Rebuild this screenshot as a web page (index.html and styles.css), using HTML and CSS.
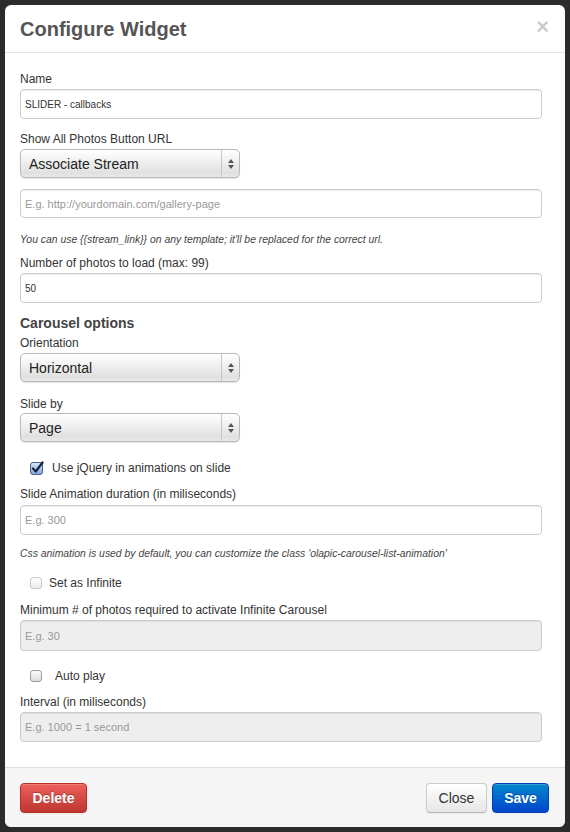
FILE: index.html
```html
<!DOCTYPE html>
<html>
<head>
<meta charset="utf-8">
<link rel="stylesheet" href="styles.css">
</head>
<body>
<div class="modal">
  <div class="modal-header">
    <h3 class="title">Configure Widget</h3>
    <span class="close-x">×</span>
  </div>
  <div class="modal-body">
    <div class="label">Name</div>
    <div class="input mt2 val">SLIDER - callbacks</div>

    <div class="label mt10">Show All Photos Button URL</div>
    <div class="select mt2"><span class="select-text">Associate Stream</span><span class="select-arrows"><svg width="8" height="12" viewBox="0 0 8 12"><path d="M4 1 L7 5 L1 5 Z M4 11 L7 7 L1 7 Z" fill="#555"/></svg></span></div>
    <div class="input h29 mt11 ph">E.g. http://yourdomain.com/gallery-page</div>
    <div class="help mt15">You can use {{stream_link}} on any template; it'll be replaced for the correct url.</div>

    <div class="label mt6">Number of photos to load (max: 99)</div>
    <div class="input mt2 val">50</div>

    <h4 class="section mt10">Carousel options</h4>
    <div class="label">Orientation</div>
    <div class="select mt2"><span class="select-text">Horizontal</span><span class="select-arrows"><svg width="8" height="12" viewBox="0 0 8 12"><path d="M4 1 L7 5 L1 5 Z M4 11 L7 7 L1 7 Z" fill="#555"/></svg></span></div>

    <div class="label mt12">Slide by</div>
    <div class="select mt1"><span class="select-text">Page</span><span class="select-arrows"><svg width="8" height="12" viewBox="0 0 8 12"><path d="M4 1 L7 5 L1 5 Z M4 11 L7 7 L1 7 Z" fill="#555"/></svg></span></div>

    <div class="check-row mt16">
      <svg class="cb" width="14" height="14" viewBox="0 0 14 14">
        <defs><linearGradient id="cbg" x1="0" y1="0" x2="0" y2="1"><stop offset="0" stop-color="#d6e6f8"/><stop offset="1" stop-color="#7fa8de"/></linearGradient></defs>
        <rect x="0.5" y="1.5" width="12" height="12" rx="2.5" fill="url(#cbg)" stroke="#4d5f80"/>
        <path d="M3 7.5 L5.8 10.5 L12.5 1.5" fill="none" stroke="#17223d" stroke-width="2.2" stroke-linecap="round" stroke-linejoin="round"/>
      </svg>
      <span class="check-label gap10">Use jQuery in animations on slide</span>
    </div>

    <div class="label mt8">Slide Animation duration (in miliseconds)</div>
    <div class="input mt3 ph">E.g. 300</div>
    <div class="help mt12">Css animation is used by default, you can customize the class 'olapic-carousel-list-animation'</div>

    <div class="check-row mt12">
      <span class="cb-empty light"></span>
      <span class="check-label gap7">Set as Infinite</span>
    </div>

    <div class="label mt9">Minimum # of photos required to activate Infinite Carousel</div>
    <div class="input disabled h31 mt2 ph">E.g. 30</div>

    <div class="check-row mt15">
      <span class="cb-empty"></span>
      <span class="check-label gap13">Auto play</span>
    </div>

    <div class="label mt8">Interval (in miliseconds)</div>
    <div class="input disabled mt2 ph">E.g. 1000 = 1 second</div>
  </div>
  <div class="modal-footer">
    <button class="btn btn-danger">Delete</button>
    <div class="footer-right">
      <button class="btn btn-default">Close</button>
      <button class="btn btn-primary">Save</button>
    </div>
  </div>
</div>
</body>
</html>
```

FILE: styles.css
```css
html, body {
  margin: 0;
  padding: 0;
}
body {
  background: #2b2b2b;
  font-family: "Liberation Sans", Arial, sans-serif;
  color: #333;
  width: 570px;
  height: 832px;
  overflow: hidden;
}
.modal {
  margin: 5px;
  width: 560px;
  height: 822px;
  background: #fff;
  border-radius: 6px;
  display: flex;
  flex-direction: column;
  overflow: hidden;
}
.modal-header {
  height: 47px;
  flex: none;
  border-bottom: 1px solid #e5e5e5;
  padding: 0 16px 0 15px;
  display: flex;
  align-items: center;
  justify-content: space-between;
}
.title {
  margin: 0;
  font-size: 20px;
  font-weight: bold;
  color: #555;
  line-height: 24px;
}
.close-x {
  font-size: 22px;
  font-weight: bold;
  color: #000;
  opacity: 0.2;
  line-height: 20px;
  margin-top: -4px;
}
.modal-body {
  flex: 1;
  padding: 16px 15px 0 15px;
  overflow: hidden;
}
.label {
  font-size: 12px;
  line-height: 20px;
  height: 18px;
  color: #333;
}
.section {
  margin-bottom: 0;
  font-size: 14px;
  font-weight: bold;
  line-height: 20px;
  height: 20px;
  color: #444;
}
.input {
  box-sizing: border-box;
  width: 522px;
  height: 30px;
  border: 1px solid #ccc;
  border-radius: 4px;
  box-shadow: inset 0 1px 1px rgba(0,0,0,0.075);
  padding: 0 4px;
  display: flex;
  align-items: center;
  font-size: 11px;
  background: #fff;
}
.input.val { color: #333; font-size: 10px; }
.input.ph { color: #999; }
.input.disabled { background: #eee; }
.h29 { height: 29px; }
.h31 { height: 31px; }
.select {
  box-sizing: border-box;
  width: 220px;
  height: 29px;
  border: 1px solid #b9b9b9;
  border-radius: 5px;
  background: linear-gradient(#ffffff 0%, #f3f3f3 35%, #e0e0e0 85%, #e9e9e9 100%);
  box-shadow: 0 1px 1px rgba(0,0,0,0.12);
  display: flex;
  align-items: center;
}
.select-text {
  flex: 1;
  padding-left: 8px;
  font-size: 14px;
  color: #222;
}
.select-arrows {
  width: 17px;
  height: 100%;
  border-left: 1px solid #c6c6c6;
  display: flex;
  align-items: center;
  justify-content: center;
}
.help {
  font-size: 10.4px;
  line-height: 14px;
  height: 14px;
  font-style: italic;
  color: #444;
  white-space: nowrap;
}
.check-row {
  display: flex;
  align-items: center;
  height: 20px;
  margin-bottom: -2px;
  padding-left: 10px;
}
.cb { display: block; flex: none; }
.cb-empty {
  box-sizing: border-box;
  width: 12px;
  height: 12px;
  border: 1px solid #9e9e9e;
  border-radius: 3px;
  background: linear-gradient(#fdfdfd, #dcdcdc);
  flex: none;
}
.cb-empty.light {
  border-color: #c8c8c8;
  background: linear-gradient(#fefefe, #ececec);
}
.check-label {
  font-size: 12px;
  line-height: 18px;
  color: #333;
}
.gap10 { margin-left: 8px; }
.gap7 { margin-left: 7px; }
.gap13 { margin-left: 13px; }
.mt1 { margin-top: 1px; }
.mt2 { margin-top: 2px; }
.mt3 { margin-top: 3px; }
.mt6 { margin-top: 6px; }
.mt8 { margin-top: 8px; }
.mt9 { margin-top: 9px; }
.mt10 { margin-top: 10px; }
.mt11 { margin-top: 11px; }
.mt12 { margin-top: 12px; }
.mt15 { margin-top: 15px; }
.mt16 { margin-top: 16px; }
.modal-footer {
  flex: none;
  height: 60px;
  box-sizing: border-box;
  border-top: 1px solid #ddd;
  background: #f5f5f5;
  padding: 0 16px 0 15px;
  display: flex;
  align-items: center;
  justify-content: space-between;
}
.footer-right {
  display: flex;
  gap: 5px;
}
.btn {
  box-sizing: border-box;
  height: 30px;
  border-radius: 4px;
  font-family: "Liberation Sans", Arial, sans-serif;
  font-size: 14px;
  padding: 0;
  cursor: pointer;
}
.btn-danger {
  width: 67px;
  color: #fff;
  font-weight: bold;
  background: linear-gradient(#ee5f5b, #bd362f);
  border: 1px solid #b8302a;
  text-shadow: 0 -1px 0 rgba(0,0,0,0.25);
  box-shadow: inset 0 1px 0 rgba(255,255,255,0.2), 0 1px 2px rgba(0,0,0,0.05);
}
.btn-default {
  width: 61px;
  color: #333;
  background: linear-gradient(#ffffff, #e6e6e6);
  border: 1px solid #ccc;
  border-bottom-color: #b3b3b3;
  box-shadow: inset 0 1px 0 rgba(255,255,255,0.2), 0 1px 2px rgba(0,0,0,0.05);
}
.btn-primary {
  width: 57px;
  color: #fff;
  font-weight: bold;
  background: linear-gradient(#0088cc, #0044cc);
  border: 1px solid #0040b8;
  text-shadow: 0 -1px 0 rgba(0,0,0,0.25);
  box-shadow: inset 0 1px 0 rgba(255,255,255,0.2), 0 1px 2px rgba(0,0,0,0.05);
}
```
